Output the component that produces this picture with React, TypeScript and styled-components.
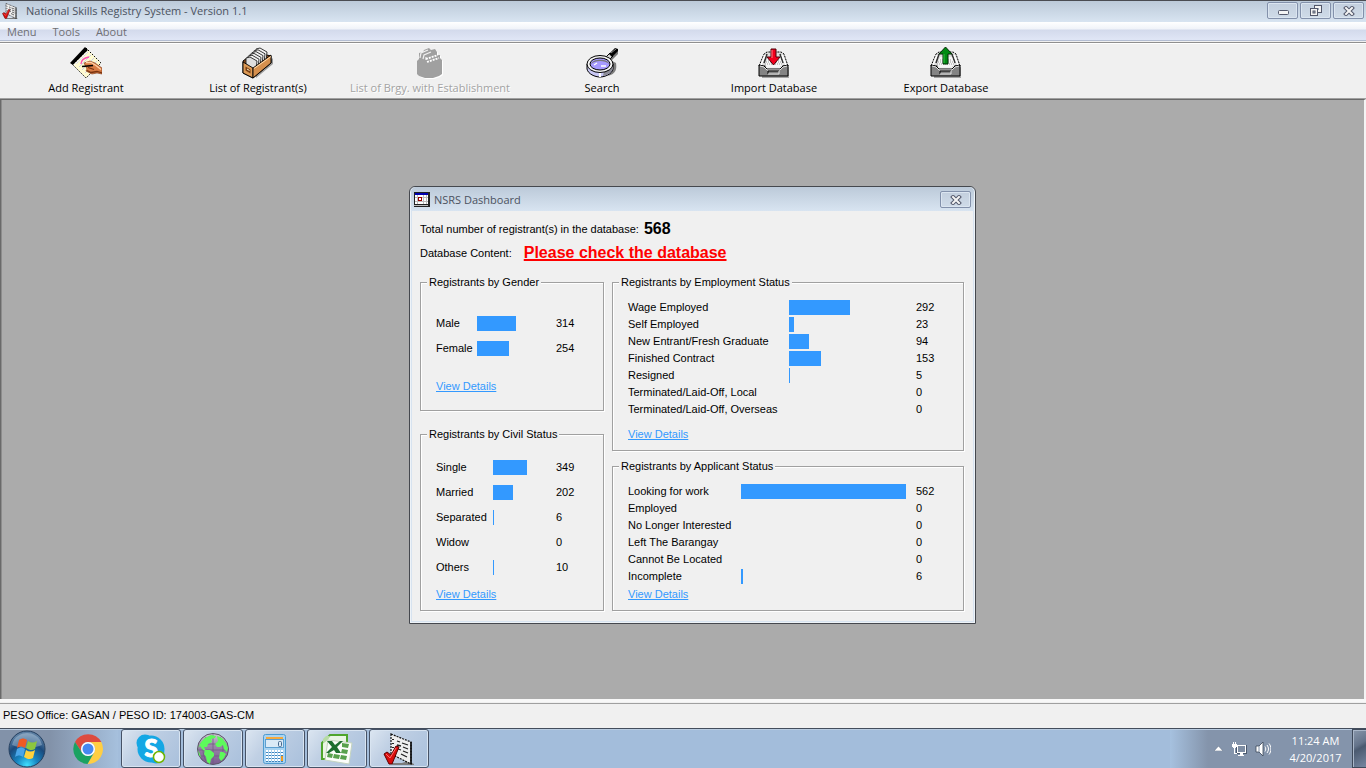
import React from 'react';
import styled, { createGlobalStyle, css } from 'styled-components';

const UI = '"Open Sans", "Noto Sans", sans-serif';
const FORM = '"Liberation Sans", Arial, sans-serif';

const GlobalStyle = createGlobalStyle`
  *, *::before, *::after { box-sizing: border-box; }
  body { margin: 0; background: #ababab; }
  button, a, table, legend { font: inherit; color: inherit; }
  svg { display: block; flex: none; }
`;

const Screen = styled.div`
  display: flex;
  flex-direction: column;
  min-height: 100vh;
  font: 11px/16px ${UI};
  color: #000;
`;

const TitleBar = styled.header`
  display: flex;
  align-items: center;
  gap: 8px;
  height: 22px;
  padding: 0 2px 2px;
  border-top: 1px solid #4a4c52;
  background: linear-gradient(#bccad9, #d8e4f1);
`;

const TitleText = styled.h1`
  flex: 1;
  margin: 0;
  font-size: 11px;
  font-weight: 400;
  line-height: 16px;
  color: #4b5260;
`;

const WindowControls = styled.div`
  display: flex;
  gap: 2px;
`;

const ControlButton = styled.button`
  display: flex;
  align-items: center;
  justify-content: center;
  width: 31px;
  height: 17px;
  padding: 0;
  border: 1px solid #8391ab;
  border-radius: 2px;
  background: linear-gradient(#c3cfde, #cfdbe8);
  box-shadow: inset 0 0 0 1px #dbe5f0;
`;

const MenuBar = styled.nav`
  display: flex;
  gap: 2px;
  height: 21px;
  background: linear-gradient(#fff 0, #f0f3f9 7px, #d3daec 8px, #e0e6f6 18px, #b3bdd2 18px, #b3bdd2 19px, #f0f0f0 19px, #f0f0f0 20px, #8f8f8f 20px);
`;

const MenuItem = styled.button`
  height: 20px;
  padding: 0 7px;
  border: 0;
  background: none;
  color: #6f6f74;
`;

const Toolbar = styled.div`
  display: flex;
  height: 56px;
  border-top: 1px solid #fff;
  border-bottom: 1px solid #a0a0a0;
  background: #f0f0f0;
`;

const ToolButton = styled.button`
  display: flex;
  flex-direction: column;
  align-items: center;
  width: 172px;
  padding: 3px 0 0;
  border: 0;
  background: none;
  white-space: nowrap;
  line-height: 18px;

  &:disabled {
    color: #a3a3a3;
    text-shadow: 1px 1px 0 #fff;
  }
`;

const Workspace = styled.main`
  position: relative;
  flex: 1;
  min-height: 560px;
  border: 1px solid #696969;
  border-width: 1px 2px 0 1px;
  border-right-color: #f4f4f4;
  box-shadow: inset 1px 0 0 #8c8c8c;
  background: #ababab;
`;

const Dialog = styled.section`
  position: absolute;
  left: 408px;
  top: 86px;
  width: 567px;
  padding: 0 2px 2px;
  border: 1px solid #45484e;
  border-radius: 6px 6px 0 0;
  background: #d7e3f0;
  box-shadow: inset 0 0 0 1px #eef3f8;
`;

const DialogTitle = styled.div`
  display: flex;
  align-items: center;
  gap: 4px;
  height: 24px;
  margin: 0 -1px;
  padding: 1px 3px 0;
  border-radius: 5px 5px 0 0;
  background: linear-gradient(#bccad9, #d8e4f1);
`;

const DialogBody = styled.div`
  display: flex;
  flex-direction: column;
  padding: 6px 9px 10px 8px;
  background: #f0f0f0;
  font: 11px/14px ${FORM};
`;

const Summary = styled.p<{ $gap: number }>`
  display: flex;
  align-items: center;
  gap: ${(p) => p.$gap}px;
  height: 24px;
  margin: 0;
`;

const Total = styled.strong`
  font-size: 16px;
  line-height: 20px;
`;

const Warning = styled.a`
  font-size: 16px;
  font-weight: 700;
  line-height: 20px;
  color: #f00;
  text-decoration: underline;
  text-decoration-thickness: 2px;
`;

const Panels = styled.div`
  display: grid;
  grid-template-columns: 184px 1fr;
  gap: 8px;
  padding-top: 10px;
`;

const Column = styled.div<{ $gap: number }>`
  display: flex;
  flex-direction: column;
  gap: ${(p) => p.$gap}px;
`;

const Group = styled.fieldset<{ $top: number; $bottom: number }>`
  min-width: 0;
  margin: 0;
  padding: ${(p) => p.$top}px 6px ${(p) => p.$bottom}px;
  border: 1px solid #a0a0a0;
  box-shadow: inset 1px 1px 0 #fff, 1px 1px 0 #fff;
`;

const Legend = styled.legend`
  padding: 0 2px;
  background: #f0f0f0;
`;

const Chart = styled.table<{ $row: number }>`
  margin-left: 9px;
  border-collapse: collapse;
  table-layout: fixed;
  white-space: nowrap;

  th, td {
    height: ${(p) => p.$row}px;
    padding: 0;
    font-weight: 400;
    text-align: left;
    vertical-align: middle;
  }

  th, td:last-child {
    padding-bottom: 2px;
  }
`;

const LabelCell = styled.th<{ $width: number }>`
  width: ${(p) => p.$width}px;
`;

const BarCell = styled.td<{ $width: number }>`
  width: ${(p) => p.$width}px;
`;

const Bar = styled.div`
  height: 15px;
  background: #3399ff;
`;

const Details = styled.a<{ $gap: number }>`
  display: block;
  width: max-content;
  margin: ${(p) => p.$gap}px 0 0 9px;
  color: #3399ff;
  text-decoration: underline;
`;

const StatusBar = styled.footer`
  height: 29px;
  padding: 6px 3px 0;
  border-top: 3px solid #f8f8f8;
  background: linear-gradient(#f0f0f0 1px, #a0a0a0 1px, #a0a0a0 2px, #f0f0f0 2px);
  font: 11px/14px ${FORM};
`;

const Taskbar = styled.footer`
  display: flex;
  align-items: stretch;
  height: 40px;
  border-top: 1px solid #434d5c;
  background:
    linear-gradient(to right, #8292a9 0, #8292a9 50px, #a6c0dd 118px, transparent 118px),
    linear-gradient(to left, #8494ab 0, #8494ab 158px, #a6c1df 196px, transparent 196px),
    #a3bddb;
  box-shadow: inset 0 1px 0 #b9cce1;
`;

const framed = css`
  border: 1px solid #465266;
  border-radius: 3px;
  background: linear-gradient(125deg, #dce6f1 0, #c0d0e4 35%, #a9c0dc 100%);
  box-shadow: inset 0 0 0 1px #d8e4f1;
`;

const TaskButton = styled.button<{ $open?: boolean; $width?: number }>`
  display: flex;
  align-items: center;
  justify-content: center;
  width: ${(p) => p.$width ?? 60}px;
  padding: 0;
  border: 0;
  background: none;
  ${(p) => p.$open && framed}
`;

const TaskList = styled.div`
  display: flex;
  flex: 1;
  gap: 2px;
`;

const Tray = styled.div`
  display: flex;
  align-items: center;
  gap: 8px;
  color: #fff;
`;

const TrayButton = styled.button`
  padding: 0;
  border: 0;
  background: none;
`;

const Clock = styled.time`
  width: 73px;
  text-align: center;
  line-height: 17px;
`;

const ShowDesktop = styled.button`
  width: 14px;
  align-self: stretch;
  padding: 0;
  border: 1px solid #3f4a5b;
  border-right: 0;
  background: linear-gradient(150deg, #8997ab 0, #64738a 40%, #4b5a70 50%, #7686a0 100%);
  box-shadow: inset 1px 1px 0 #a9b6c8;
`;

function ChecklistIcon({ size }: { size: number }) {
  return (
    <svg width={size} height={size} viewBox="0 0 32 32" aria-hidden="true">
      <path d="M9 30h10l6-2 6 3v1H9z" fill="#7c7c7c" />
      <path d="M8 1l20 8v22L8 21z" fill="#efefef" stroke="#111" strokeWidth="1.2" strokeDasharray="2 1" />
      <path d="M28 9v22" stroke="#000" strokeWidth="1.5" />
      <path d="M14 8l3 1M19 10l6 2M14 12l4 1M20 14l5 2M15 16l3 1M20 18l5 2M18 21l6 3" stroke="#222" strokeWidth="1.3" />
      <path d="M10 6v1M10 10v1M10 14v1" stroke="#222" strokeWidth="2" />
      <path d="M1 21l3-2 4 3 5-9 3 1-7 17H6z" fill="#d80c0c" stroke="#5c0000" strokeWidth="1" />
      <path d="M3 21l4 4 6-10" fill="none" stroke="#ff6a6a" strokeWidth="1" />
    </svg>
  );
}

function NotebookIcon() {
  return (
    <svg width="32" height="32" viewBox="0 0 32 32" aria-hidden="true">
      <path d="M16 1L31 16 16 31 1 16z" fill="#fffbd2" stroke="#000" strokeDasharray="1.4 1.4" />
      <path d="M6 17l12-12M9 20l12-12M12 23l12-12M15 26l12-12" stroke="#cdd0e8" strokeWidth="1" />
      <path d="M0 16L15 0l3 3L3 18z" fill="#000" />
      <path d="M4 18L18 4" stroke="#fff" strokeWidth="1.4" strokeDasharray="1.4 1" />
      <path d="M11 17c0-4 3-6 8-7" fill="none" stroke="#ff4fb4" strokeWidth="1.3" />
      <path d="M14 16l6-2 5 2 7 5v6l-5-1-5 1-6-3 1-2z" fill="#d97c45" stroke="#7a3410" strokeWidth="0.600" />
      <path d="M16 15.500l5 0 5 3 5 4" fill="none" stroke="#ffd0a6" strokeWidth="1.3" />
      <path d="M17 23.500l4 2 6-1 5 1.500M18 20.500l6 2" fill="none" stroke="#7a3410" strokeWidth="1.3" />
      <path d="M12 19.500l11-1" stroke="#000" strokeWidth="1.600" />
    </svg>
  );
}

function CardBoxIcon() {
  return (
    <svg width="32" height="32" viewBox="0 0 32 32" aria-hidden="true">
      <path d="M14 31L31 17v-6L14 27z" fill="#9a9a9a" />
      <path d="M1 14l12-9 16 4v7L11 31 1 26z" fill="#8a4a1c" stroke="#000" />
      {[0, 1, 2, 3, 4, 5].map((i) => (
        <path
          key={i}
          d="M0 1l4-1 7 4-1 9-8-3-2-1z"
          transform={`translate(${14 - i * 2} ${1 + i * 1.8})`}
          fill={i === 5 ? '#dedede' : '#f4f4f4'}
          stroke="#222"
          strokeWidth="0.9"
        />
      ))}
      <path d="M1 15l10 6v10L1 26z" fill="#dd9a55" stroke="#000" strokeWidth="0.9" />
      <path d="M11 21L29 8v8L11 31z" fill="#d6904e" stroke="#000" strokeWidth="0.9" />
      <path d="M12 21.500L29 9.500" stroke="#ffdcae" />
      <path d="M3.500 19.500l5 3v4l-5-3z" fill="#7a4014" />
      <path d="M5 22l2.500 1.500" stroke="#fff0c8" />
    </svg>
  );
}

function DisabledBoxIcon() {
  const shape = 'M2 13l2-2V5l4-1 1-2 5-2 2 2 4-1 2 3v3h3v3l2 2v14l-3 2-6 2h-8l-6-2-2-2z';
  return (
    <svg width="32" height="32" viewBox="0 0 32 32" aria-hidden="true">
      <path d={shape} transform="translate(2 2)" fill="#fff" />
      <path d={shape} transform="translate(1 1)" fill="#a0a0a0" />
      <path d="M6 11l1-5 7-3M9 12l1-4 7-3M12 13l0-3" fill="none" stroke="#f0f0f0" strokeWidth="1.200" />
      <path d="M12 12l12-4M13 15l12-4" fill="none" stroke="#fff" strokeWidth="1.800" strokeDasharray="2 1" />
    </svg>
  );
}

function MagnifierIcon() {
  return (
    <svg width="32" height="32" viewBox="0 0 32 32" aria-hidden="true">
      <path d="M22 29c8-2 9-7 8-13l-4-2-2 12z" fill="#808080" />
      <path d="M22 9l8-7 3 1-1 4-7 7z" fill="#777" />
      <path d="M20 10l4-4 3 3-4 4z" fill="#d8d8d8" stroke="#000" />
      <path d="M23 7l6-6 3 1v2l-6 6z" fill="#000" />
      <path d="M25 6l5-4" stroke="#888" />
      <path d="M1 17v5c1 5 8 8 13 8s12-3 13-8v-5z" fill="#c8c8f4" stroke="#000" />
      <path d="M17 29c5-1 9-4 10-8v-4l-9 7z" fill="#8c8c96" />
      <path d="M14 25v5" stroke="#fff" strokeWidth="2" />
      <ellipse cx="14" cy="17" rx="13" ry="8.5" fill="#f4f4f4" stroke="#000" />
      <ellipse cx="14" cy="17" rx="10" ry="6" fill="#a69aff" stroke="#000" />
      <path d="M5 17c1-5 17-6 18 0-4-4-14-4-18 0z" fill="#777" />
      <path d="M8 18l3-2M15 19h5" stroke="#fff" strokeWidth="1.4" />
    </svg>
  );
}

function TrayIcon({ out }: { out?: boolean }) {
  return (
    <svg width="32" height="32" viewBox="0 0 32 32" aria-hidden="true">
      <path d="M4 29v2h27V20z" fill="#a4a4a4" />
      <path d="M1 19L6 7l3-2h14l3 2 4 12z" fill="#dedede" stroke="#000" strokeDasharray="2 1" />
      <path d="M6 16L9 7M25 16L22 7" stroke="#333" strokeWidth="1.6" />
      <path d="M3 18L7 8M28 18L24 8" stroke="#fff" strokeWidth="1.5" />
      <path d="M7 18l3-8h12l3 8-3 2H9z" fill="#f6f6f6" />
      <path d="M8 15h16M7 17h18M10 13h12" stroke="#9a9a9a" strokeDasharray="1 1" />
      <path d="M1 18l5 1 3 3h13l3-3 5-1v11H1z" fill="#848484" stroke="#000" />
      <path d="M2 19l4 1 3 3h13l3-3 4-1" fill="none" stroke="#e4e4e4" />
      <path d="M10 27v-3h11" fill="none" stroke="#000" />
      <path d="M10 27h11v-3" fill="none" stroke="#e4e4e4" />
      {out ? (
        <>
          <path d="M15.500 0L22 7h-4v10h-5V7H9z" fill="#008a12" stroke="#002a04" />
          <path d="M14 7v9" stroke="#35c445" />
        </>
      ) : (
        <>
          <path d="M13 2h5v8h4l-6.500 8L9 10h4z" fill="#f3001c" stroke="#4c0008" />
          <path d="M14 3v8" stroke="#ff8088" />
        </>
      )}
    </svg>
  );
}

function CloseGlyph() {
  return (
    <svg width="12" height="10" viewBox="0 0 12 10" aria-hidden="true">
      <path d="M3 2l6 6M9 2L3 8" stroke="#53586b" strokeWidth="4" strokeLinecap="square" />
      <path d="M3 2l6 6M9 2L3 8" stroke="#f4f4f4" strokeWidth="2" strokeLinecap="square" />
    </svg>
  );
}

function MinimizeGlyph() {
  return (
    <svg width="12" height="10" viewBox="0 0 12 10" aria-hidden="true">
      <rect x="1.500" y="4.500" width="10" height="4" rx="1" fill="#f4f4f4" stroke="#53586b" />
    </svg>
  );
}

function RestoreGlyph() {
  return (
    <svg width="12" height="11" viewBox="0 0 12 11" aria-hidden="true">
      <rect x="4.500" y="0.500" width="7" height="7" fill="#f4f4f4" stroke="#53586b" />
      <rect x="7" y="3" width="2" height="2" fill="#9aa5b8" />
      <rect x="0.500" y="3.500" width="7" height="7" fill="#f4f4f4" stroke="#53586b" />
      <rect x="3" y="6" width="2" height="2" fill="#c5d1df" stroke="#53586b" />
    </svg>
  );
}

function FormIcon() {
  return (
    <svg width="16" height="15" viewBox="0 0 16 15" shapeRendering="crispEdges" aria-hidden="true">
      <rect width="16" height="15" fill="#222" />
      <rect x="1" y="1" width="13" height="11" fill="#fff" />
      <rect x="1" y="1" width="13" height="2" fill="#0000b0" />
      <path d="M3.500 3v9M9.500 3v9M12.500 3v9M1 5.500h13M1 9.500h13" stroke="#bcbcbc" />
      <rect x="4.500" y="5.500" width="3" height="3" fill="#fff" stroke="#900" />
      <path d="M0 13.500h14" stroke="#bbb" />
    </svg>
  );
}

function StartOrb() {
  return (
    <svg width="38" height="38" viewBox="0 0 38 38" aria-hidden="true">
      <defs>
        <radialGradient id="orb" cx="50%" cy="95%" r="85%">
          <stop offset="0" stopColor="#3fe0ff" />
          <stop offset="0.350" stopColor="#1684c0" />
          <stop offset="0.700" stopColor="#1b4a7c" />
          <stop offset="1" stopColor="#5c7fa3" />
        </radialGradient>
      </defs>
      <circle cx="19" cy="19" r="18" fill="url(#orb)" stroke="#26405f" />
      <path d="M4 15C6 6 14 3 19 3s13 3 15 12c-9 4-21 4-30 0z" fill="#d4e4f2" opacity="0.350" />
      <path d="M11 10c3-2 5-2 8 0l-2 8c-3-2-5-2-8 0z" fill="#ee5a24" />
      <path d="M20 11c3 2 6 2 9 0l-2 8c-3 2-6 1-9-1z" fill="#8cc63e" />
      <path d="M9 19c3-2 5-2 8 0l-2 8c-3-2-5-2-8 0z" fill="#4aa5e8" />
      <path d="M18 20c3 2 6 2 9 0l-2 8c-3 2-6 1-9-1z" fill="#ffd23c" />
    </svg>
  );
}

function ChromeIcon() {
  return (
    <svg width="32" height="32" viewBox="0 0 32 32" aria-hidden="true">
      <path d="M3 9A15 15 0 0 1 29.300 9L16 9A7 7 0 0 0 9.900 19.500Z" fill="#dd4b3e" />
      <path d="M29.300 9A15 15 0 0 1 15.500 31L22.100 19.500A7 7 0 0 0 16 9Z" fill="#ffce43" />
      <path d="M3 9A15 15 0 0 0 15.500 31L22.100 19.500A7 7 0 0 1 9.900 19.500Z" fill="#1ba261" />
      <circle cx="16" cy="16" r="7" fill="#fff" />
      <circle cx="16" cy="16" r="5.500" fill="#4688f1" />
    </svg>
  );
}

function SkypeIcon() {
  return (
    <svg width="32" height="32" viewBox="0 0 32 32" aria-hidden="true">
      <circle cx="10" cy="10" r="8.500" fill="#14a7e4" />
      <circle cx="21" cy="22" r="8.500" fill="#14a7e4" />
      <circle cx="16" cy="16" r="13.500" fill="#14a7e4" />
      <text x="16" y="24" textAnchor="middle" fontFamily="Lato, sans-serif" fontWeight="900" fontSize="24" fill="#fff" stroke="#fff" strokeWidth="1">S</text>
      <circle cx="24" cy="24" r="5.500" fill="#fff" stroke="#6fb400" strokeWidth="1.500" />
    </svg>
  );
}

function GlobeIcon() {
  return (
    <svg width="32" height="32" viewBox="0 0 32 32" aria-hidden="true">
      <defs>
        <linearGradient id="sea" x1="0" y1="0" x2="0" y2="1">
          <stop offset="0" stopColor="#cfc6d6" />
          <stop offset="0.400" stopColor="#9a86a8" />
          <stop offset="1" stopColor="#7b5a90" />
        </linearGradient>
      </defs>
      <circle cx="16" cy="16" r="15.500" fill="url(#sea)" stroke="#5b5568" />
      <path d="M3 11h26M1 17h30M3 23h26M9 4c-4 7-4 17 0 24M23 4c4 7 4 17 0 24M16 1v30" fill="none" stroke="#6d5880" strokeWidth="0.700" />
      <path d="M4 9l4-4 6-3 5 1-1 2-4 1 1 3-4 2-1 3-3 0 2 4-3-1-3-4-2 2z" fill="#5dfa5b" />
      <path d="M20 3l5 2 4 5 2 5-1 4-3-3-1-4-3 2-3 0-2-3 3-3z" fill="#5dfa5b" />
      <path d="M8 17l5 0 4 3 0 3-3 3-1 5-3-2-1-5-2-3z" fill="#5dfa5b" />
      <path d="M23 19l3 0 3 2-2 4-3 3-2-3z" fill="#5dfa5b" />
      <path d="M1 17l2 4 1 4-2-3z" fill="#5dfa5b" />
    </svg>
  );
}

function CalculatorIcon() {
  return (
    <svg width="32" height="32" viewBox="0 0 32 32" aria-hidden="true">
      <rect x="4.500" y="1.500" width="22" height="29" rx="2" fill="#a9d3f1" stroke="#4e9bd0" />
      <rect x="7" y="4" width="17" height="2" fill="#f5a93c" />
      <rect x="6.500" y="6.500" width="18" height="8" fill="#dbeaf6" stroke="#5c9fd0" />
      <rect x="19.500" y="8.500" width="3" height="5" rx="1" fill="none" stroke="#47688c" />
      <path d="M7 18h17M7 21h17M7 24h17M7 27h17" stroke="#fff" strokeWidth="2" strokeDasharray="2 1" />
      <path d="M7 19.500h17M7 22.500h17M7 25.500h17M7 28.500h17" stroke="#3f84bd" strokeDasharray="2 1" />
      <rect x="22" y="23" width="2" height="5" fill="#f39a1e" />
    </svg>
  );
}

function SpreadsheetIcon() {
  return (
    <svg width="34" height="32" viewBox="0 0 34 32" aria-hidden="true">
      <path d="M10 2h17v24H2V10z" fill="#eaf5e4" stroke="#4fa52c" strokeWidth="2" />
      <path d="M3 10c3-1 6-4 7-7H6L3 6z" fill="#b7dca5" />
      <path d="M8 7l24 3-3 21-24-4z" fill="#fbfdfa" stroke="#c4d4bf" />
      <path d="M22 10l7 1-1 4-6-1zM22 16l6 1-1 4-6-1zM21 22l6 1-1 4-6-1zM14 21l6 1-1 4-6-1zM8 20l5 1-1 4-5-1z" fill="#58a14d" />
      <path d="M7 8h5l3 4 5-4h3l-6 6 4 6h-5l-2-3-5 3H6l6-6z" fill="#1d6e2e" />
    </svg>
  );
}

function ChevronIcon() {
  return (
    <svg width="9" height="5" viewBox="0 0 9 5" aria-hidden="true">
      <path d="M4.500 0L9 5H0z" fill="#fff" stroke="#59687f" strokeWidth="0.500" />
    </svg>
  );
}

function NetworkIcon() {
  return (
    <svg width="16" height="16" viewBox="0 0 16 16" shapeRendering="crispEdges" aria-hidden="true">
      <path d="M6 4h10v9H5V4z" fill="#4b596e" />
      <path d="M6 4h9v8H6z" fill="#fff" />
      <path d="M7 5h7v6H7z" fill="#7e8da3" />
      <path d="M9 12h3v2h1v1H7v-1h2zM1 3h5v3H5v1H2V6H1zM2 1h1v2H2zM4 1h1v2H4zM3 7h1v6H3zM4 12h2v1H4z" fill="#fff" />
    </svg>
  );
}

function SpeakerIcon() {
  return (
    <svg width="16" height="16" viewBox="0 0 16 16" aria-hidden="true">
      <path d="M1 5h3l4-4v14l-4-4H1z" fill="#fff" stroke="#3a4658" strokeWidth="0.800" />
      <path d="M4 5v6" stroke="#8090a6" />
      <path d="M10 5.500c1 1.500 1 3.500 0 5M12 4c2 2.500 2 5.500 0 8M14 2.500c2.500 3 2.500 8 0 11" fill="none" stroke="#fff" />
    </svg>
  );
}

type Entry = [label: string, count: number];

interface GroupData {
  title: string;
  rows: Entry[];
  barScale: number;
  labelWidth: number;
  barWidth: number;
  rowHeight: number;
  top: number;
  linkGap: number;
  bottom: number;
}

const REGISTRANTS = 568;

const gender: GroupData = {
  title: 'Registrants by Gender',
  rows: [['Male', 314], ['Female', 254]],
  barScale: 71, labelWidth: 41, barWidth: 79, rowHeight: 25, top: 22, linkGap: 18, bottom: 17,
};

const civil: GroupData = {
  title: 'Registrants by Civil Status',
  rows: [['Single', 349], ['Married', 202], ['Separated', 6], ['Widow', 0], ['Others', 10]],
  barScale: 56, labelWidth: 57, barWidth: 63, rowHeight: 25, top: 14, linkGap: 7, bottom: 9,
};

const employment: GroupData = {
  title: 'Registrants by Employment Status',
  rows: [
    ['Wage Employed', 292], ['Self Employed', 23], ['New Entrant/Fresh Graduate', 94], ['Finished Contract', 153],
    ['Resigned', 5], ['Terminated/Laid-Off, Local', 0], ['Terminated/Laid-Off, Overseas', 0],
  ],
  barScale: 119, labelWidth: 161, barWidth: 127, rowHeight: 17, top: 10, linkGap: 9, bottom: 9,
};

const applicant: GroupData = {
  title: 'Registrants by Applicant Status',
  rows: [
    ['Looking for work', 562], ['Employed', 0], ['No Longer Interested', 0], ['Left The Barangay', 0],
    ['Cannot Be Located', 0], ['Incomplete', 6],
  ],
  barScale: 167, labelWidth: 113, barWidth: 175, rowHeight: 17, top: 10, linkGap: 2, bottom: 9,
};

function StatGroup({ data }: { data: GroupData }) {
  return (
    <Group $top={data.top} $bottom={data.bottom}>
      <Legend>{data.title}</Legend>
      <Chart $row={data.rowHeight}>
        <tbody>
          {data.rows.map(([label, count]) => (
            <tr key={label}>
              <LabelCell scope="row" $width={data.labelWidth}>{label}</LabelCell>
              <BarCell $width={data.barWidth}>
                <Bar style={{ width: Math.round((count / REGISTRANTS) * data.barScale) }} />
              </BarCell>
              <td>{count}</td>
            </tr>
          ))}
        </tbody>
      </Chart>
      <Details href="#" $gap={data.linkGap}>View Details</Details>
    </Group>
  );
}

const tools = [
  { label: 'Add Registrant', icon: <NotebookIcon /> },
  { label: 'List of Registrant(s)', icon: <CardBoxIcon /> },
  { label: 'List of Brgy. with Establishment', icon: <DisabledBoxIcon />, disabled: true },
  { label: 'Search', icon: <MagnifierIcon /> },
  { label: 'Import Database', icon: <TrayIcon /> },
  { label: 'Export Database', icon: <TrayIcon out /> },
];

export default function App() {
  return (
    <Screen>
      <GlobalStyle />
      <TitleBar>
        <ChecklistIcon size={16} />
        <TitleText>National Skills Registry System - Version 1.1</TitleText>
        <WindowControls>
          <ControlButton aria-label="Minimize"><MinimizeGlyph /></ControlButton>
          <ControlButton aria-label="Restore"><RestoreGlyph /></ControlButton>
          <ControlButton aria-label="Close"><CloseGlyph /></ControlButton>
        </WindowControls>
      </TitleBar>
      <MenuBar>
        <MenuItem>Menu</MenuItem>
        <MenuItem>Tools</MenuItem>
        <MenuItem>About</MenuItem>
      </MenuBar>
      <Toolbar>
        {tools.map((t) => (
          <ToolButton key={t.label} disabled={t.disabled}>
            {t.icon}
            {t.label}
          </ToolButton>
        ))}
      </Toolbar>
      <Workspace>
        <Dialog aria-label="NSRS Dashboard">
          <DialogTitle>
            <FormIcon />
            <TitleText as="h2">NSRS Dashboard</TitleText>
            <ControlButton aria-label="Close dashboard"><CloseGlyph /></ControlButton>
          </DialogTitle>
          <DialogBody>
            <Summary $gap={5}>
              Total number of registrant(s) in the database: <Total>{REGISTRANTS}</Total>
            </Summary>
            <Summary $gap={12}>
              Database Content: <Warning href="#">Please check the database</Warning>
            </Summary>
            <Panels>
              <Column $gap={16}>
                <StatGroup data={gender} />
                <StatGroup data={civil} />
              </Column>
              <Column $gap={8}>
                <StatGroup data={employment} />
                <StatGroup data={applicant} />
              </Column>
            </Panels>
          </DialogBody>
        </Dialog>
      </Workspace>
      <StatusBar>PESO Office: GASAN / PESO ID: 174003-GAS-CM</StatusBar>
      <Taskbar>
        <TaskButton aria-label="Start" $width={54}><StartOrb /></TaskButton>
        <TaskButton aria-label="Chrome" $width={67}><ChromeIcon /></TaskButton>
        <TaskList>
          <TaskButton aria-label="Skype" $open><SkypeIcon /></TaskButton>
          <TaskButton aria-label="Globe" $open><GlobeIcon /></TaskButton>
          <TaskButton aria-label="Calculator" $open><CalculatorIcon /></TaskButton>
          <TaskButton aria-label="Spreadsheet" $open><SpreadsheetIcon /></TaskButton>
          <TaskButton aria-label="Skills Registry" $open><ChecklistIcon size={32} /></TaskButton>
        </TaskList>
        <Tray>
          <TrayButton aria-label="Show hidden icons"><ChevronIcon /></TrayButton>
          <TrayButton aria-label="Network"><NetworkIcon /></TrayButton>
          <TrayButton aria-label="Volume"><SpeakerIcon /></TrayButton>
          <Clock>11:24 AM<br />4/20/2017</Clock>
        </Tray>
        <ShowDesktop aria-label="Show desktop" />
      </Taskbar>
    </Screen>
  );
}
